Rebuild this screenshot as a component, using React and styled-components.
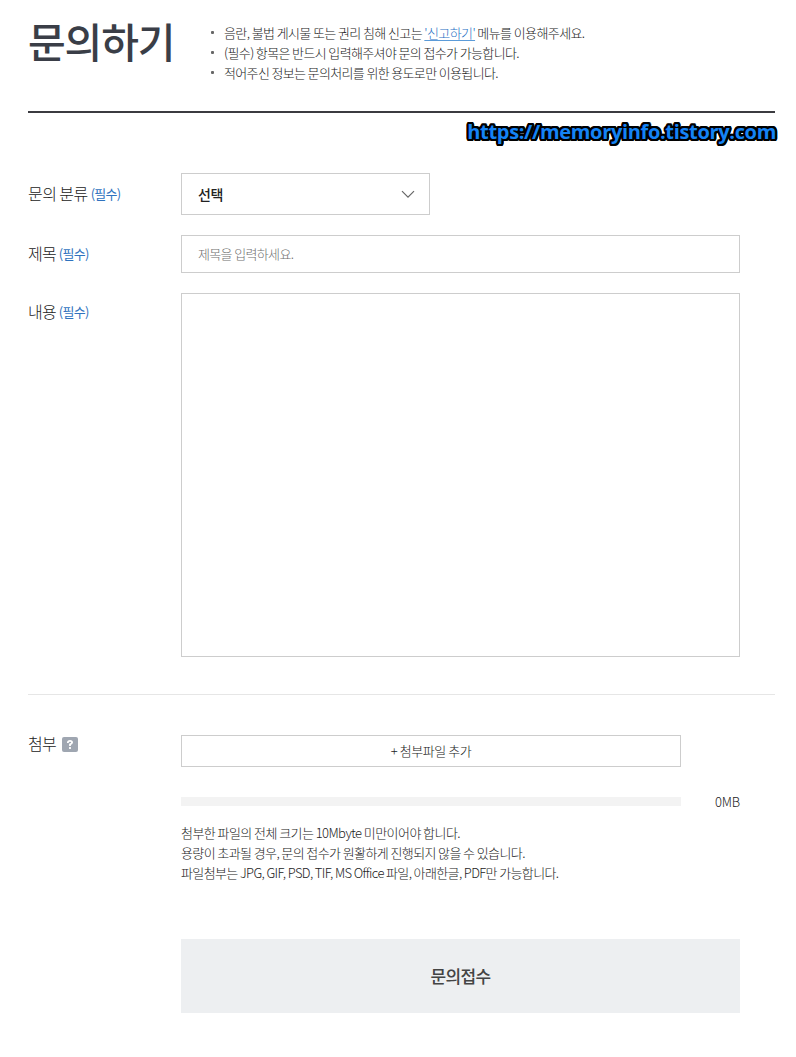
import React from 'react';
import styled, { createGlobalStyle } from 'styled-components';

const GlobalStyle = createGlobalStyle`
  * { box-sizing: border-box; }
  body {
    margin: 0;
    background: #fff;
    color: #222;
    font-family: "Noto Sans CJK KR", sans-serif;
    font-size: 13px;
    font-weight: 300;
    line-height: 20px;
  }
`;

const Page = styled.main`
  width: 796px;
  height: 1057px;
  padding: 0 21px 0 28px;
  overflow: hidden;
`;

const Header = styled.header`
  position: relative;
  display: flex;
  height: 113px;
  border-bottom: 2px solid #3b3b40;
`;

const Title = styled.h1`
  flex: none;
  width: 183px;
  margin: 10px 0 0;
  color: #3a3e47;
  font-size: 41px;
  font-weight: 500;
  letter-spacing: -1.1px;
  line-height: 60px;
  white-space: nowrap;
`;

const Notices = styled.ul`
  margin: 23px 0 0;
  padding: 0;
  list-style: none;
`;

const Notice = styled.li`
  display: flex;
  align-items: center;
  height: 20px;
  white-space: nowrap;
  letter-spacing: ${(p) => p.$spacing}px;

  &::before {
    content: '';
    width: 3px;
    height: 3px;
    margin: 0 10px 1px 0;
    border-radius: 1px;
    background: #666;
  }
`;

const ReportLink = styled.a`
  color: #1f6fc4;
  text-decoration: underline;
  text-decoration-color: #5b9bd8;
  text-underline-offset: 2px;
`;

const OUTLINE = Array.from({ length: 16 }, (_, i) => {
  const angle = (i * Math.PI) / 8;
  return `${(Math.cos(angle) * 2.2).toFixed(2)}px ${(Math.sin(angle) * 2.2).toFixed(2)}px 0 #000`;
}).join(', ');

const Watermark = styled.span`
  position: absolute;
  top: 119px;
  right: -1px;
  color: #1583f5;
  font-family: "Open Sans", "Noto Sans", sans-serif;
  font-size: 20px;
  font-weight: 700;
  line-height: 26px;
  letter-spacing: -0.33px;
  white-space: nowrap;
  text-shadow: ${OUTLINE};
`;

const Fields = styled.section`
  display: flex;
  flex-direction: column;
  gap: 20px;
  height: 582px;
  padding-top: 60px;
  border-bottom: 1px solid #e6e6e6;
`;

const Row = styled.div`
  display: flex;
  align-items: flex-start;
`;

const Label = styled.label`
  flex: none;
  display: flex;
  align-items: center;
  width: 153px;
  height: 24px;
  margin-top: ${(p) => p.$top}px;
  font-size: 16px;
  letter-spacing: ${(p) => p.$spacing || -0.8}px;
  white-space: nowrap;
`;

const Required = styled.span`
  margin: 1px 0 0 3px;
  color: #2f72be;
  font-size: 13px;
  font-weight: 400;
  letter-spacing: -0.75px;
`;

const Select = styled.button`
  display: flex;
  align-items: center;
  justify-content: space-between;
  width: 249px;
  height: 42px;
  padding: 0 14px 1px 16px;
  border: 1px solid #cdcdcd;
  background: #fff;
  color: #222;
  font: 500 14px "Noto Sans CJK KR", sans-serif;
  letter-spacing: -0.5px;
`;

const Chevron = styled.svg`
  margin-top: 2px;
`;

const Input = styled.input`
  width: 559px;
  height: 38px;
  padding: 0 16px 2px;
  border: 1px solid #cdcdcd;
  font: 300 13px "Noto Sans CJK KR", sans-serif;
  letter-spacing: -0.65px;

  &::placeholder { color: #707070; opacity: 1; }
`;

const TextArea = styled.textarea`
  display: block;
  width: 559px;
  height: 364px;
  border: 1px solid #cdcdcd;
  resize: none;
`;

const Attachment = styled.section`
  display: flex;
  align-items: flex-start;
  padding-top: 40px;
`;

const HelpBadge = styled.span`
  display: grid;
  place-items: center;
  width: 16px;
  height: 15px;
  margin: 2px 0 0 6px;
  border-radius: 2px;
  background: #9fa6b1;
`;

const AttachmentBody = styled.div`
  width: 559px;
`;

const AddFile = styled.button`
  display: block;
  width: 500px;
  height: 32px;
  padding: 0 0 2px;
  border: 1px solid #cdcdcd;
  background: #fff;
  color: #222;
  font: 300 13px "Noto Sans CJK KR", sans-serif;
  letter-spacing: -0.45px;
`;

const Usage = styled.div`
  display: flex;
  align-items: center;
  justify-content: space-between;
  height: 20px;
  margin-top: 25px;
  letter-spacing: -0.2px;
`;

const Track = styled.div`
  width: 500px;
  height: 9px;
  margin-bottom: 1px;
  background: #f3f3f3;
`;

const Guide = styled.p`
  margin: 0;
  white-space: nowrap;
  letter-spacing: ${(p) => p.$spacing}px;
`;

const Guides = styled.div`
  margin-top: 11px;
`;

const Submit = styled.button`
  display: block;
  width: 559px;
  height: 74px;
  margin-top: 56px;
  padding: 0 0 2px;
  border: 0;
  background: #edeff1;
  color: #444;
  font: 500 17px "Noto Sans CJK KR", sans-serif;
  letter-spacing: -0.6px;
`;

export default function App() {
  return (
    <>
      <GlobalStyle />
      <Page>
        <Header>
          <Title>문의하기</Title>
          <Notices>
            <Notice $spacing={-0.6}>
              <span>
                음란, 불법 게시물 또는 권리 침해 신고는 <ReportLink>'신고하기'</ReportLink> 메뉴를 이용해주세요.
              </span>
            </Notice>
            <Notice $spacing={-0.63}>(필수) 항목은 반드시 입력해주셔야 문의 접수가 가능합니다.</Notice>
            <Notice $spacing={-0.65}>적어주신 정보는 문의처리를 위한 용도로만 이용됩니다.</Notice>
          </Notices>
          <Watermark>https://memoryinfo.tistory.com</Watermark>
        </Header>

        <Fields>
          <Row>
            <Label $top={8} $spacing={-0.55}>문의 분류<Required>(필수)</Required></Label>
            <Select type="button">
              선택
              <Chevron width="14" height="9" viewBox="0 0 14 9" fill="none" stroke="#666" strokeWidth="1.2">
                <path d="M1 1.2L7 7.2L13 1.2" />
              </Chevron>
            </Select>
          </Row>
          <Row>
            <Label $top={6}>제목<Required>(필수)</Required></Label>
            <Input placeholder="제목을 입력하세요." />
          </Row>
          <Row>
            <Label $top={6}>내용<Required>(필수)</Required></Label>
            <TextArea />
          </Row>
        </Fields>

        <Attachment>
          <Label as="div" $top={-4}>
            첨부
            <HelpBadge>
              <svg width="6" height="9" viewBox="0 0 6 9" fill="none" stroke="#fff" strokeWidth="1.8">
                <path d="M0.9 3V2.6Q0.9 0.9 3 0.9Q5.1 0.9 5.1 2.5Q5.1 3.7 3 4.4V6M3 7.1V9" />
              </svg>
            </HelpBadge>
          </Label>
          <AttachmentBody>
            <AddFile type="button">+ 첨부파일 추가</AddFile>
            <Usage>
              <Track />
              <span>0MB</span>
            </Usage>
            <Guides>
              <Guide $spacing={-0.56}>첨부한 파일의 전체 크기는 10Mbyte 미만이어야 합니다.</Guide>
              <Guide $spacing={-0.6}>용량이 초과될 경우, 문의 접수가 원활하게 진행되지 않을 수 있습니다.</Guide>
              <Guide $spacing={-0.62}>파일첨부는 JPG, GIF, PSD, TIF, MS Office 파일, 아래한글, PDF만 가능합니다.</Guide>
            </Guides>
            <Submit type="button">문의접수</Submit>
          </AttachmentBody>
        </Attachment>
      </Page>
    </>
  );
}
